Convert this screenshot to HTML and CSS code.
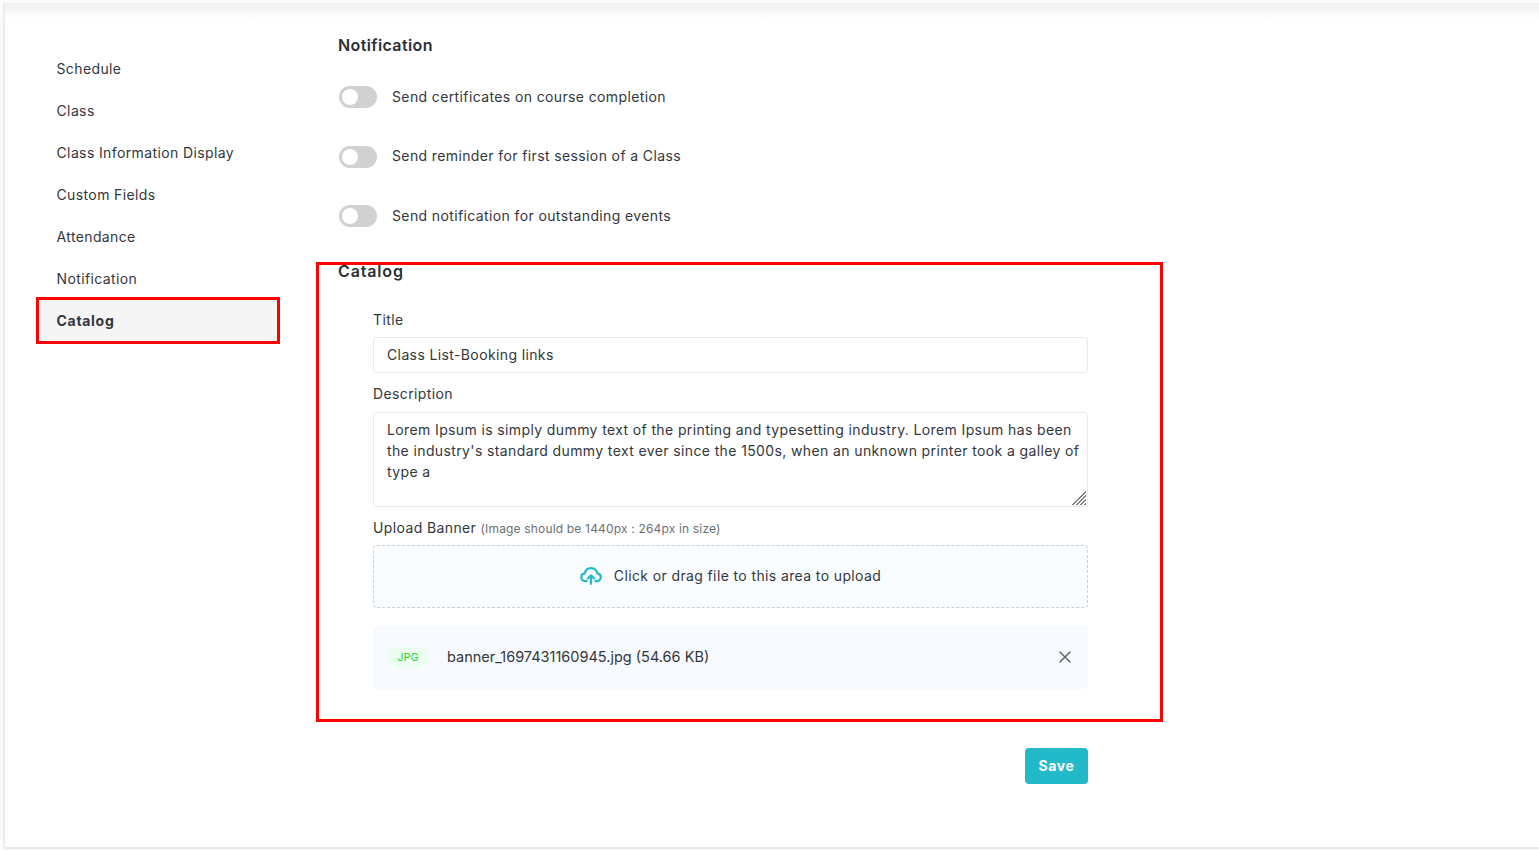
FILE: index.html
```html
<!DOCTYPE html>
<html lang="en">
<head>
    <meta charset="UTF-8">
    <meta name="viewport" content="width=device-width, initial-scale=1.0">
    <title>Settings</title>
    <link rel="stylesheet" href="styles.css">
</head>
<body>
    <div class="page-card">
        <nav class="side-nav">
            <a class="nav-item">Schedule</a>
            <a class="nav-item">Class</a>
            <a class="nav-item">Class Information Display</a>
            <a class="nav-item">Custom Fields</a>
            <a class="nav-item">Attendance</a>
            <a class="nav-item">Notification</a>
            <a class="nav-item active">Catalog<span class="mark"></span></a>
        </nav>

        <main class="content">
            <section class="notification-section">
                <h2>Notification</h2>
                <div class="toggle-row">
                    <span class="toggle"></span>
                    <span class="toggle-label">Send certificates on course completion</span>
                </div>
                <div class="toggle-row">
                    <span class="toggle"></span>
                    <span class="toggle-label">Send reminder for first session of a Class</span>
                </div>
                <div class="toggle-row">
                    <span class="toggle"></span>
                    <span class="toggle-label">Send notification for outstanding events</span>
                </div>
            </section>

            <section class="catalog-section">
                <span class="mark"></span>
                <h2>Catalog</h2>
                <div class="form-fields">
                    <label class="field-label title-label">Title</label>
                    <input class="text-input" type="text" value="Class List-Booking links">

                    <label class="field-label description-label">Description</label>
                    <div class="text-area-wrap">
                        <textarea class="text-area" wrap="off">Lorem Ipsum is simply dummy text of the printing and typesetting industry. Lorem Ipsum has been
the industry's standard dummy text ever since the 1500s, when an unknown printer took a galley of
type a</textarea>
                        <span class="resize-grip"></span>
                    </div>

                    <label class="field-label upload-label">Upload Banner <small>(Image should be 1440px : 264px in size)</small></label>
                    <div class="drop-zone">
                        <svg class="upload-icon" width="22" height="18" viewBox="0 0 22 18" fill="none" stroke="#22b9c9" stroke-width="2.200" stroke-linecap="round" stroke-linejoin="round">
                            <path d="M6.500 14.200H5.500C3 14.200 1.200 12.500 1.200 10.300c0-2 1.500-3.600 3.500-3.900C5.400 3.200 8 1.200 11 1.200c3 0 5.600 2 6.300 5.200 2 .3 3.500 1.900 3.500 3.900 0 2.200-1.800 3.900-4.300 3.900h-1"/>
                            <path d="M11 16.800V8.500M7.800 11.500 11 8.300l3.200 3.200"/>
                        </svg>
                        <span>Click or drag file to this area to upload</span>
                    </div>
                    <div class="file-row">
                        <span class="file-badge">JPG</span>
                        <span class="file-name">banner_1697431160945.jpg (54.66 KB)</span>
                        <svg class="file-remove" width="14" height="14" viewBox="0 0 14 14" stroke="#5c6470" stroke-width="1.500" stroke-linecap="round">
                            <path d="M2 2l10 10M12 2 2 12"/>
                        </svg>
                    </div>
                </div>
            </section>

            <div class="form-actions">
                <button class="save-btn">Save</button>
            </div>
        </main>
    </div>
</body>
</html>
```

FILE: styles.css
```css
* {
    margin: 0;
    padding: 0;
    box-sizing: border-box;
}

html,
body {
    height: 100%;
    overflow: hidden;
}

body {
    font-family: Inter, "Noto Sans", sans-serif;
    font-size: 14px;
    letter-spacing: 0.38px;
    color: #33373d;
    background: #fafafa;
    padding: 3px 0 1px 3px;
}

.page-card {
    display: flex;
    height: 100%;
    background: linear-gradient(#f0f0f0, #fff 16px);
    border-left: 2px solid #ececec;
    border-bottom: 2px solid #e8e8e8;
    border-bottom-left-radius: 4px;
}

.side-nav {
    width: 275px;
    flex-shrink: 0;
    padding: 45px 0 0 31px;
}

.nav-item {
    position: relative;
    display: block;
    width: 244px;
    height: 42px;
    line-height: 42px;
    padding-left: 20.500px;
}

.nav-item.active {
    font-weight: 700;
    letter-spacing: 0.700px;
    background: #f5f5f5;
}

.mark {
    position: absolute;
    border: 3px solid #f00;
    pointer-events: none;
}

.nav-item .mark {
    left: 0;
    right: 0;
    top: -3px;
    bottom: -2px;
}

.content {
    width: 750px;
    margin-left: 58px;
}

h2 {
    font-size: 16px;
    font-weight: 600;
    line-height: 24px;
    color: #2b2f35;
}

.notification-section {
    padding-top: 30px;
    height: 262px;
}

.toggle-row {
    display: flex;
    align-items: center;
    gap: 15px;
    height: 22px;
    margin-top: 37.500px;
}

.notification-section h2 + .toggle-row {
    margin-top: 29px;
}

.toggle-label {
    margin-bottom: 2px;
}

.toggle {
    position: relative;
    width: 38px;
    height: 22px;
    margin-left: 1px;
    border-radius: 11px;
    background: #d1d1d1;
}

.toggle::after {
    content: "";
    position: absolute;
    left: 3px;
    top: 3px;
    width: 16px;
    height: 16px;
    border-radius: 50%;
    background: #fff;
}

.catalog-section {
    position: relative;
}

.catalog-section > .mark {
    left: -22px;
    top: 3px;
    width: 847px;
    height: 460px;
}

.catalog-section h2 {
    margin-top: -6px;
    letter-spacing: 0.850px;
}

.form-fields {
    margin-left: 35px;
    width: 715px;
}

.field-label {
    display: block;
    line-height: 20px;
}

.title-label {
    margin-top: 27px;
    margin-bottom: 7px;
}

.description-label {
    margin-top: 11px;
    margin-bottom: 8px;
}

.upload-label {
    margin-bottom: 6px;
}

.upload-label small {
    font-size: 12px;
    letter-spacing: 0.170px;
    color: #6b6f75;
}

.text-input,
.text-area {
    display: block;
    width: 100%;
    font: inherit;
    letter-spacing: inherit;
    color: inherit;
    background: #fff;
    border: 1px solid #e8e8e8;
    border-radius: 4px;
    padding: 0 13px;
    outline: none;
}

.text-input {
    height: 36px;
    padding-bottom: 2px;
}

.text-area-wrap {
    position: relative;
    margin-bottom: 11px;
}

.text-area {
    height: 95px;
    padding-top: 6px;
    line-height: 21px;
    overflow: hidden;
    resize: none;
}

.resize-grip {
    position: absolute;
    right: 2px;
    bottom: 2px;
    width: 15px;
    height: 15px;
    background: repeating-linear-gradient(135deg, #808080 0 1.200px, #fff 1.200px 2.800px);
    clip-path: polygon(100% 0, 100% 100%, 0 100%);
}

.drop-zone {
    display: flex;
    align-items: center;
    justify-content: center;
    gap: 12px;
    height: 63px;
    padding-bottom: 2px;
    background: #fafdff;
    border: 1px dashed #cfcfcf;
    border-radius: 4px;
}

.file-row {
    display: flex;
    align-items: center;
    height: 63px;
    margin-top: 18px;
    padding: 0 16px 2px 14px;
    background: #f7faff;
    border-radius: 4px;
}

.file-badge {
    width: 42px;
    height: 20px;
    line-height: 20px;
    text-align: center;
    font-size: 11px;
    letter-spacing: 0;
    color: #35d435;
    background: #eafff0;
    border-radius: 10px;
}

.file-name {
    flex: 1;
    margin-left: 18px;
    font-size: 14.500px;
    letter-spacing: 0;
}

.form-actions {
    display: flex;
    justify-content: flex-end;
    margin-top: 59px;
    width: 750px;
}

.save-btn {
    width: 63px;
    height: 36px;
    padding-bottom: 2px;
    font: inherit;
    font-weight: 700;
    letter-spacing: 0.600px;
    color: #fff;
    background: #22b9c9;
    border: none;
    border-radius: 4px;
}
```
